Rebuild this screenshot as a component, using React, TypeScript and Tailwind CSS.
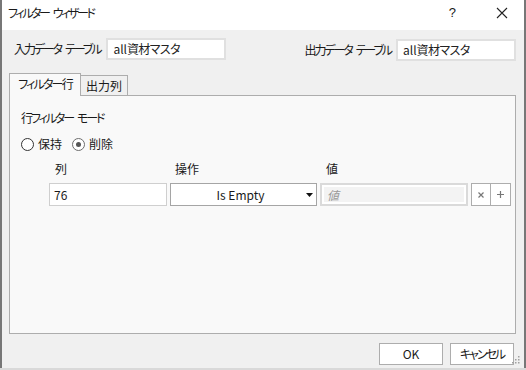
import React from 'react';

const jp = "font-['Noto_Sans_CJK_JP','Noto_Sans',sans-serif] [font-feature-settings:'palt']";

// Japanese labels: narrow katakana, with a visible word gap
function Words({ parts, className = '' }: { parts: string[]; className?: string }) {
  return (
    <span className={`flex gap-[4px] ${className}`}>
      {parts.map((p) => (
        <span key={p}>{p}</span>
      ))}
    </span>
  );
}

function Radio({ label, checked }: { label: string; checked?: boolean }) {
  return (
    <label className="flex items-center gap-[4px]">
      <span
        className={`flex h-[13px] w-[13px] items-center justify-center rounded-full border bg-white ${
          checked ? 'border-[#6d6d6d]' : 'border-[#333]'
        }`}
      >
        {checked && <span className="h-[5px] w-[5px] rounded-full bg-[#555]" />}
      </span>
      <span>{label}</span>
    </label>
  );
}

function TextBox() {
  return (
    <div className="flex h-[22px] w-[120px] items-center border-2 border-[#e0e0e0] bg-white pl-[5px] text-[#222]">
      all<span className="tracking-[-0.6px]">資材マスタ</span>
    </div>
  );
}

export default function App() {
  return (
    <div className={`relative h-[370px] w-[526px] overflow-hidden bg-[#d9d9d9] text-[12px] text-[#1a1a1a] ${jp}`}>
      <div className="flex h-[368px] flex-col border-x-2 border-[#777] bg-[#f0f0f0]">
        {/* title bar */}
        <div className="flex h-[30px] shrink-0 items-center bg-white pl-[6px]">
          <Words parts={['フィルター', 'ウィザード']} className="flex-1 pb-[4px] tracking-[-2.4px]" />
          <span className="mr-[40px] pb-[4px] text-[13px] font-['Liberation_Sans',sans-serif]">?</span>
          <svg width="12" height="12" viewBox="0 0 12 12" className="mr-[16px] mb-[4px]">
            <path d="M1 1 L11 11 M11 1 L1 11" stroke="#222" strokeWidth="1.1" />
          </svg>
        </div>

        {/* tables */}
        <div className="mt-[7px] flex items-center justify-between pl-[12px] pr-[8px]">
          <div className="flex items-center gap-[6px]">
            <Words parts={['入力データ', 'テーブル']} className="tracking-[-2.1px]" />
            <TextBox />
          </div>
          <div className="mt-[2px] flex items-center gap-[5px]">
            <Words parts={['出力データ', 'テーブル']} className="tracking-[-2.1px]" />
            <TextBox />
          </div>
        </div>

        {/* tabs */}
        <div className="mt-[12px] flex items-end pl-[7px]">
          <div className="relative z-10 -mb-px flex h-[23px] w-[72px] items-center justify-center border border-b-0 border-[#adadad] bg-[#f9f9f9] pb-[2px] tracking-[-1.8px]">
            フィルター行
          </div>
          <div className="flex h-[20px] w-[47px] items-center justify-center border border-l-0 border-b-0 border-[#adadad] bg-[#f0f0f0]">
            出力列
          </div>
        </div>
        <div className="ml-[7px] mr-[8px] flex h-[239px] flex-col border border-[#adadad] bg-[#f9f9f9] pl-[11px] pr-[4px]">
          <Words parts={['行フィルター', 'モード']} className="mt-[13px] tracking-[-2.1px]" />
          <div className="mt-[8px] flex items-center gap-[10px]">
            <Radio label="保持" />
            <Radio label="削除" checked />
          </div>
          <div className="mt-[7px] flex">
            <span className="ml-[34px] w-[120px]">列</span>
            <span className="w-[151px]">操作</span>
            <span>値</span>
          </div>
          <div className="mt-[5px] flex h-[23px] items-stretch">
            <div className="ml-[28px] flex w-[118px] items-center border border-[#cfcfcf] bg-white pl-[4px]">76</div>
            <div className="ml-[3px] flex w-[147px] items-center border border-[#a5a5a5] bg-white">
              <span className="flex-1 pl-[4px] text-center">Is Empty</span>
              <svg width="7" height="4" viewBox="0 0 7 4" className="mr-[3px]">
                <path d="M0 0 H7 L3.5 4 Z" fill="#111" />
              </svg>
            </div>
            <div className="ml-[3px] flex w-[148px] items-stretch border-2 border-[#dadada] bg-white p-[2px]">
              <div className="flex flex-1 items-center bg-[#f3f3f3] pl-[3px] italic text-[#999]">値</div>
            </div>
            <div className="ml-[3px] flex w-[20px] items-center justify-center border border-[#adadad] bg-white">
              <svg width="6" height="6" viewBox="0 0 6 6">
                <path d="M0.5 0.5 L5.5 5.5 M5.5 0.5 L0.5 5.5" stroke="#777" strokeWidth="1.2" />
              </svg>
            </div>
            <div className="flex w-[20px] items-center justify-center border border-l-0 border-[#adadad] bg-white">
              <svg width="7" height="7" viewBox="0 0 7 7">
                <path d="M3.5 0 V7 M0 3.5 H7" stroke="#777" strokeWidth="1.2" />
              </svg>
            </div>
          </div>
        </div>

        {/* footer */}
        <div className="mt-[9px] flex justify-end gap-[7px] pr-[10px]">
          <button className="h-[22px] w-[64px] border border-[#adadad] bg-white">OK</button>
          <button className="h-[22px] w-[64px] border border-[#adadad] bg-white tracking-[-2px]">キャンセル</button>
        </div>
      </div>
      <svg width="10" height="10" viewBox="0 0 10 10" className="absolute right-[6px] bottom-[4px]">
        {[
          [8, 0],
          [8, 3],
          [5, 3],
          [8, 6],
          [5, 6],
          [2, 6],
        ].map(([x, y]) => (
          <rect key={`${x}-${y}`} x={x} y={y} width="1.5" height="1.5" fill="#a0a0a0" />
        ))}
      </svg>
    </div>
  );
}
